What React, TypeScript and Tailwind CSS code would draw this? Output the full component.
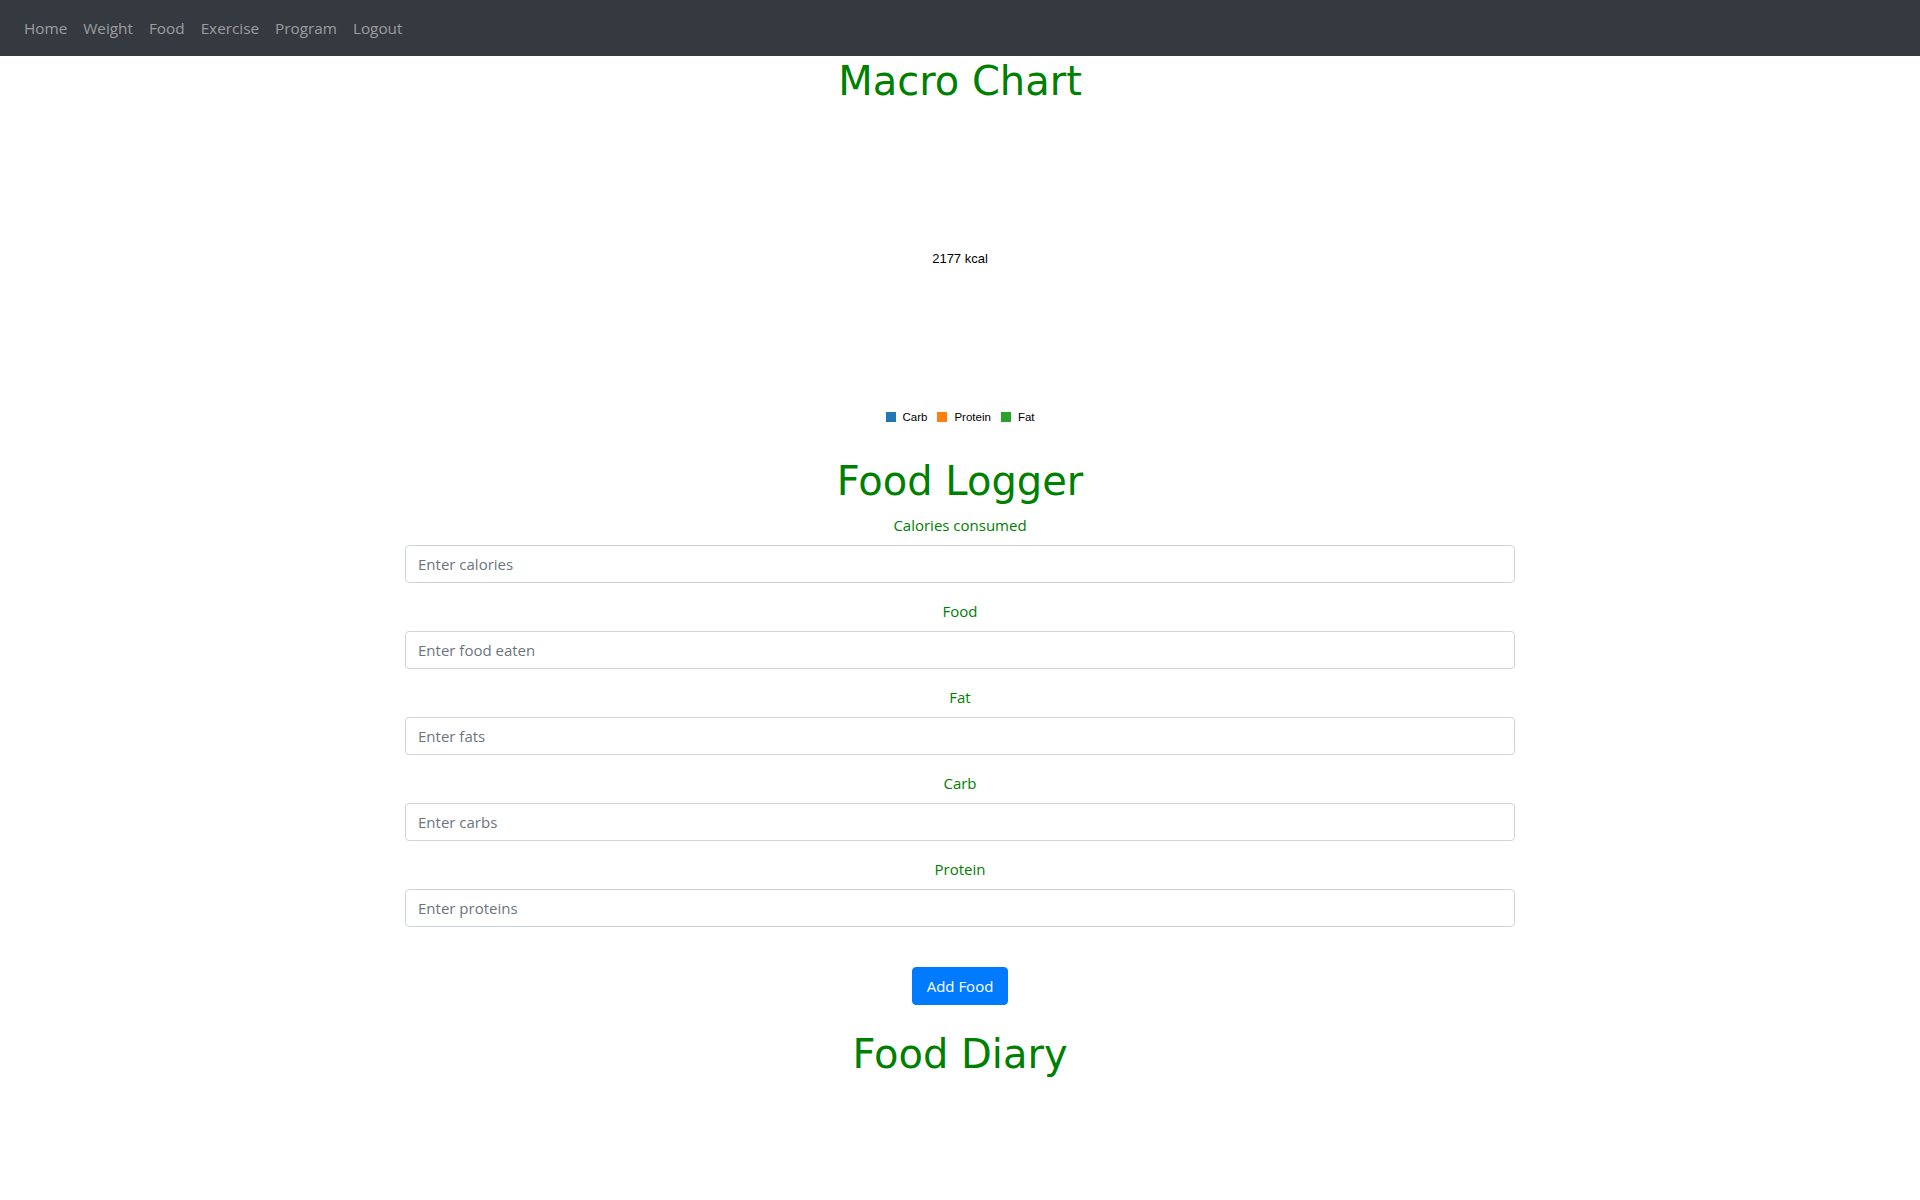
import React from "react";

const navLinks = ["Home", "Weight", "Food", "Exercise", "Program", "Logout"];

const fields = [
  { label: "Calories consumed", placeholder: "Enter calories" },
  { label: "Food", placeholder: "Enter food eaten" },
  { label: "Fat", placeholder: "Enter fats" },
  { label: "Carb", placeholder: "Enter carbs" },
  { label: "Protein", placeholder: "Enter proteins" },
];

const legend = [
  { name: "Carb", color: "bg-[#1f77b4]" },
  { name: "Protein", color: "bg-[#ff7f0e]" },
  { name: "Fat", color: "bg-[#2ca02c]" },
];

export default function App() {
  return (
    <div className="min-h-screen bg-white font-['Open_Sans',sans-serif] text-[15px] leading-6 text-[#212529]">
      <nav className="flex h-[56px] items-center bg-[#343a40] px-4">
        {navLinks.map((l) => (
          <a key={l} href="#" className="px-2 text-[15.3px] leading-6 text-[rgba(255,255,255,0.5)]">
            {l}
          </a>
        ))}
      </nav>

      <h1 className="mb-2 mt-[1px] text-center font-['DejaVu_Sans',Verdana,sans-serif] text-[40px] font-normal leading-[48px] text-[#008000]">
        Macro Chart
      </h1>

      <div className="flex h-[344px] flex-col items-center pt-[138px] font-['Liberation_Sans',Arial,sans-serif]">
        <div className="text-[13px] leading-4 text-black">2177 kcal</div>
        <div className="mt-[142px] flex items-center text-[11.5px] leading-4 text-black">
          {legend.map((item, i) => (
            <div key={item.name} className={`flex items-center gap-[7px] ${i > 0 ? "ml-[10px]" : ""}`}>
              <span className="block h-[10px] w-[10px]">
                <span className={`block h-full w-full ${item.color}`} />
              </span>
              <span>{item.name}</span>
            </div>
          ))}
        </div>
      </div>

      <h1 className="mb-2 text-center font-['DejaVu_Sans',Verdana,sans-serif] text-[40px] font-normal leading-[48px] text-[#008000]">
        Food Logger
      </h1>

      <form className="mx-auto w-[1110px]" onSubmit={(e) => e.preventDefault()}>
        {fields.map((f) => (
          <div key={f.label} className="mb-4 flex flex-col">
            <label className="mb-2 text-center text-[15px] leading-6 text-[#008000]">{f.label}</label>
            <input
              type="text"
              placeholder={f.placeholder}
              className="h-[38px] w-full rounded-[4px] border border-[#ced4da] bg-white px-3 text-[15px] text-[#495057] outline-none placeholder:text-[#6c757d]"
            />
          </div>
        ))}
        <div className="flex justify-center pt-6">
          <button
            type="submit"
            className="h-[38px] w-[96px] rounded-[4px] border border-[#007bff] bg-[#007bff] text-[15px] leading-6 text-white"
          >
            Add Food
          </button>
        </div>
      </form>

      <h1 className="mt-[25px] text-center font-['DejaVu_Sans',Verdana,sans-serif] text-[40px] font-normal leading-[48px] text-[#008000]">
        Food Diary
      </h1>
    </div>
  );
}
